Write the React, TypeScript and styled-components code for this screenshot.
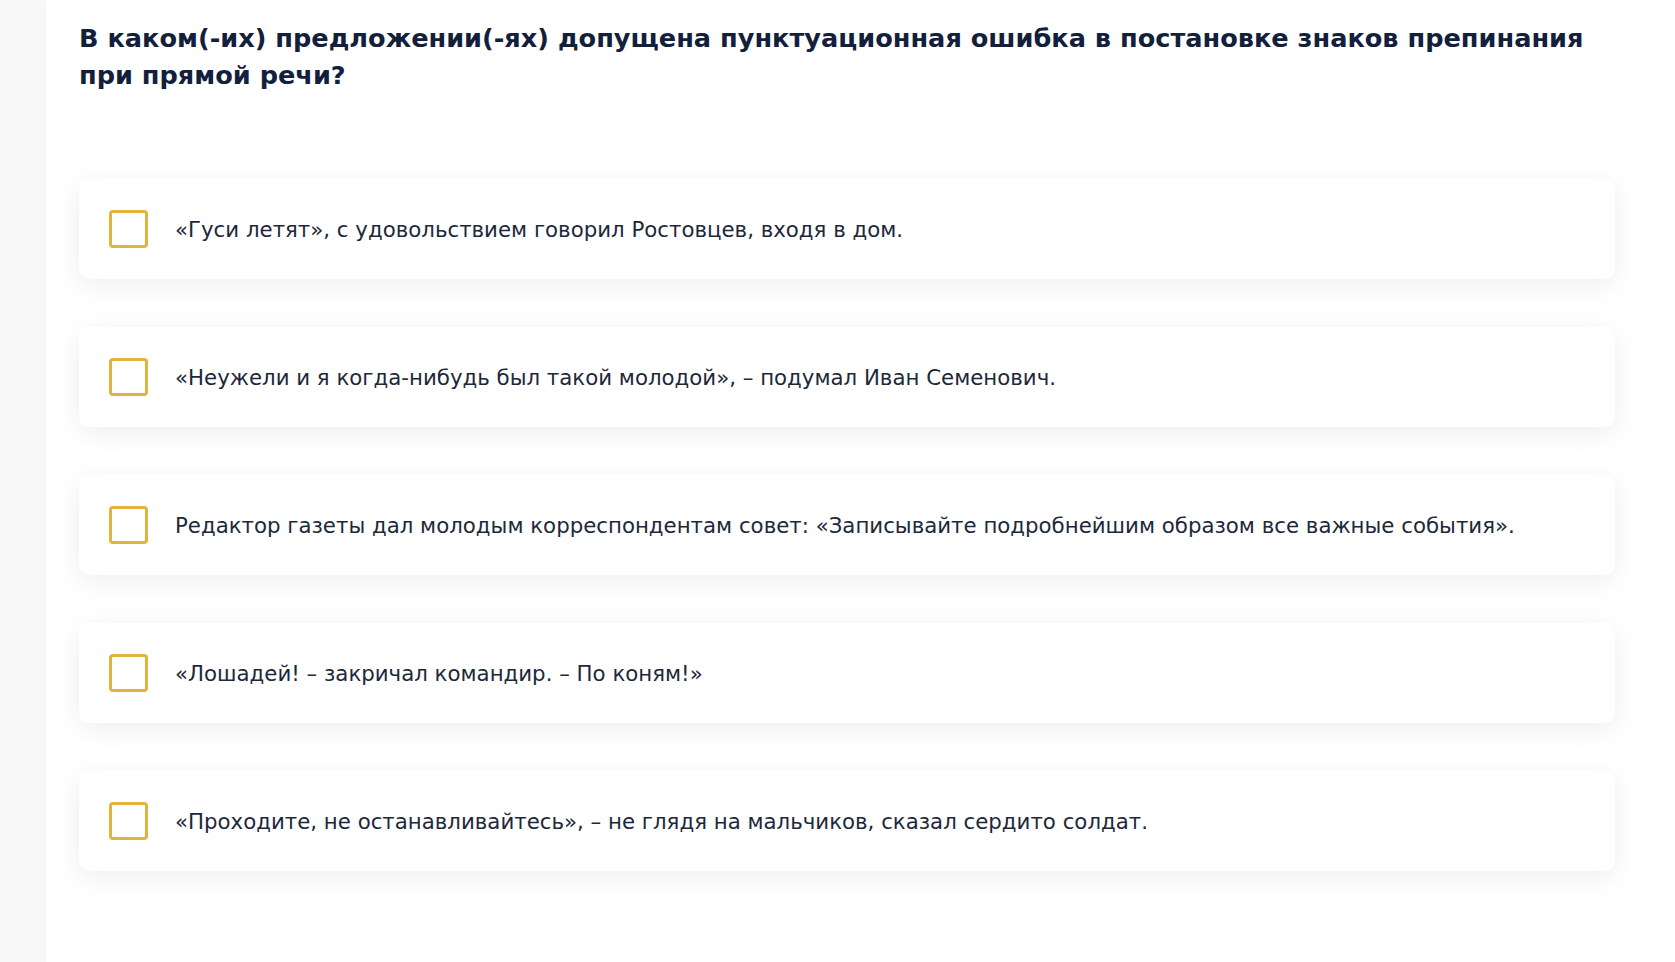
import React from "react";
import styled, { createGlobalStyle } from "styled-components";

const GlobalStyle = createGlobalStyle`
  html, body {
    margin: 0;
    padding: 0;
    background: #f9f9f9;
  }
  body {
    font-family: "DejaVu Sans", "Open Sans", sans-serif;
  }
`;

const Page = styled.div`
  display: flex;
  min-height: 962px;
`;

const Main = styled.main`
  flex: 1;
  margin-left: 46px;
  background: #ffffff;
  padding: 20px 60px 40px 33px;
  box-shadow: -4px 0 12px rgba(0, 0, 0, 0.02);
`;

const Question = styled.h1`
  margin: 0 0 85px;
  font-size: 25.6px;
  line-height: 37px;
  font-weight: 700;
  color: #13203b;
`;

const Options = styled.div`
  display: flex;
  flex-direction: column;
  gap: 48px;
`;

const OptionCard = styled.label`
  display: flex;
  align-items: center;
  gap: 27px;
  height: 100px;
  padding: 0 30px;
  background: #ffffff;
  border-radius: 10px;
  box-shadow: 0 6px 28px rgba(0, 0, 0, 0.07);
  cursor: pointer;
`;

const Box = styled.span<{ checked?: boolean }>`
  flex: none;
  width: 39px;
  height: 38px;
  box-sizing: border-box;
  border: 3px solid #e2b33e;
  border-radius: 4px;
  background: ${(p) => (p.checked ? "#e2b33e" : "#ffffff")};
`;

const OptionText = styled.span`
  font-size: 21.3px;
  color: #1d283b;
`;

const options = [
  "«Гуси летят», с удовольствием говорил Ростовцев, входя в дом.",
  "«Неужели и я когда-нибудь был такой молодой», – подумал Иван Семенович.",
  "Редактор газеты дал молодым корреспондентам совет: «Записывайте подробнейшим образом все важные события».",
  "«Лошадей! – закричал командир. – По коням!»",
  "«Проходите, не останавливайтесь», – не глядя на мальчиков, сказал сердито солдат.",
];

export default function App() {
  return (
    <>
      <GlobalStyle />
      <Page>
        <Main>
          <Question>
            В каком(-их) предложении(-ях) допущена пунктуационная ошибка в постановке знаков препинания при прямой речи?
          </Question>
          <Options>
            {options.map((text) => (
              <OptionCard key={text}>
                <Box />
                <OptionText>{text}</OptionText>
              </OptionCard>
            ))}
          </Options>
        </Main>
      </Page>
    </>
  );
}
